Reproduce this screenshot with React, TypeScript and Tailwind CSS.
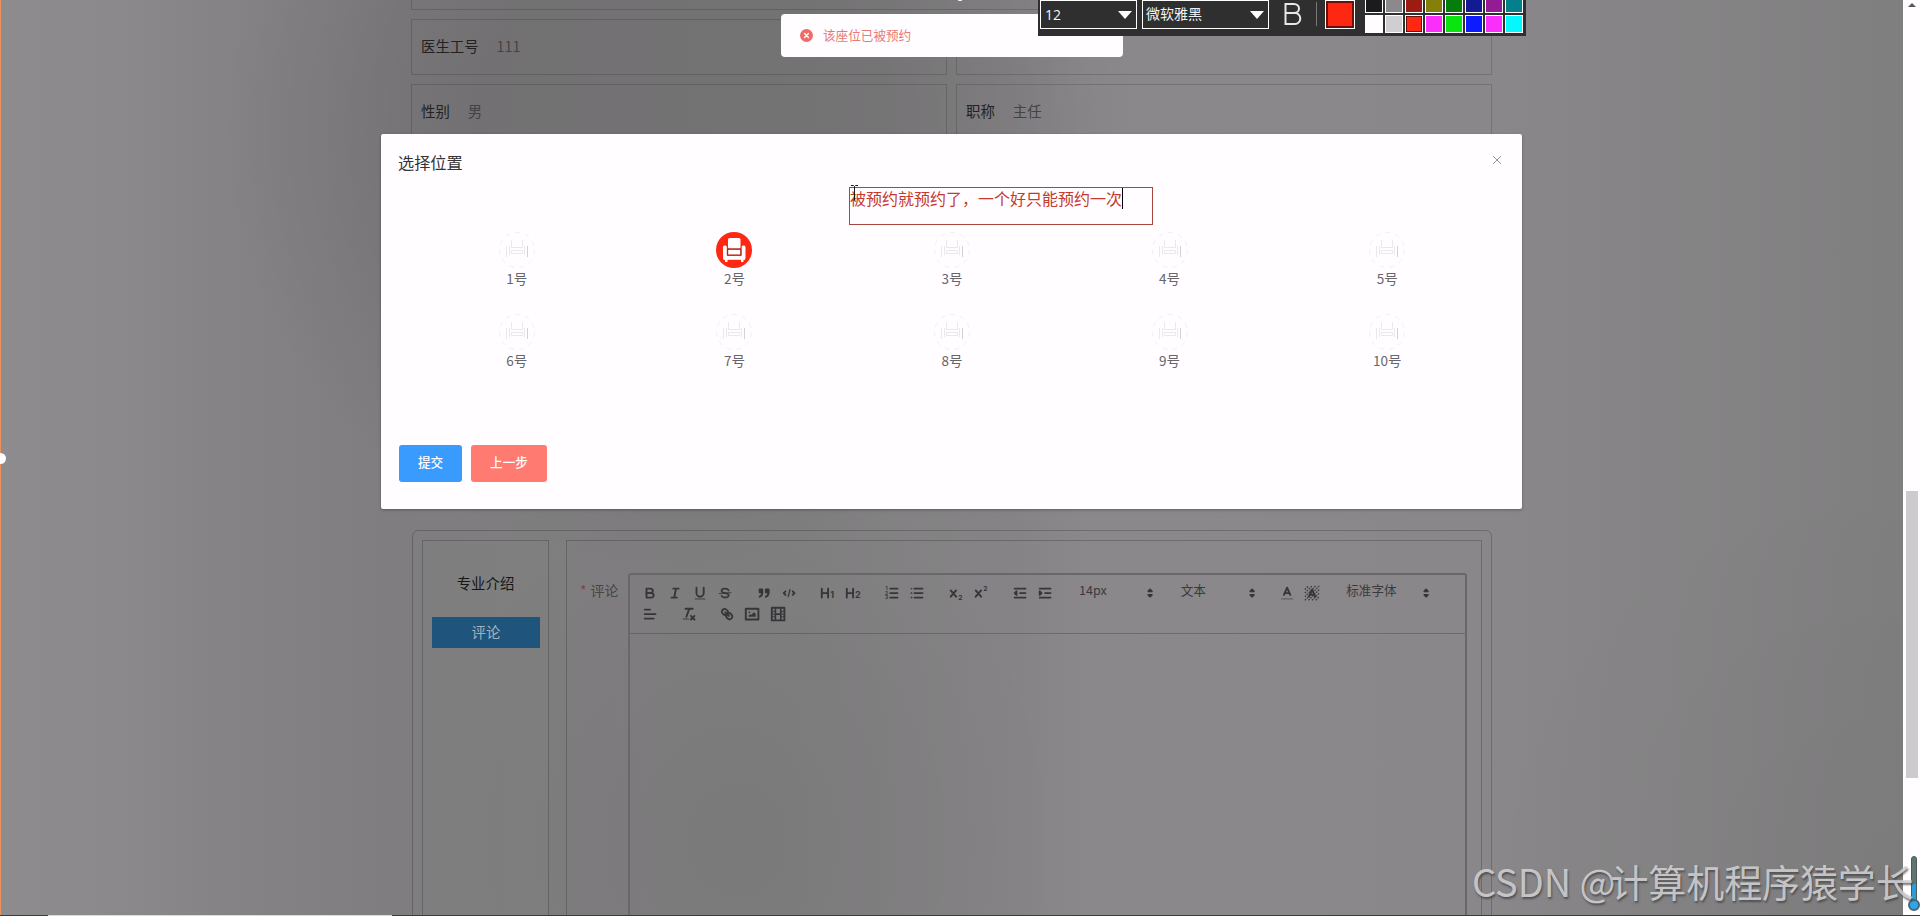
import React from 'react';

interface PickerProps {
  label: string;
  width: string;
}

interface SeatProps {
  number: number;
  taken?: boolean;
}

const topSwatches = [
  'bg-[#1b1a1c]',
  'bg-[#8b898c]',
  'bg-[#9c1c12]',
  'bg-[#84800a]',
  'bg-[#067c0c]',
  'bg-[#141a94]',
  'bg-[#931b93]',
  'bg-[#04808c]',
];

const bottomSwatches = [
  'bg-[#fffdff]',
  'bg-[#d0ced1]',
  'bg-[#fe2712]',
  'bg-[#fb2ffb]',
  'bg-[#0ae40f]',
  'bg-[#0c1cfe]',
  'bg-[#fb2ffb]',
  'bg-[#04f8fe]',
];

// 18x18 toolbar glyph, rendered at 90% page zoom
const Glyph: React.FC<{ children: React.ReactNode }> = ({ children }) => (
  <span className="flex h-[21.6px] w-[25.2px] shrink-0 items-center justify-center">
    <svg
      viewBox="0 0 18 18"
      className="h-[16.2px] w-[16.2px]"
      fill="none"
      stroke="#363638"
      strokeWidth="2.1"
      strokeLinecap="round"
      strokeLinejoin="round"
    >
      {children}
    </svg>
  </span>
);

const GlyphText: React.FC<{ x: number; y: number; size: number; children: string }> = ({
  x,
  y,
  size,
  children,
}) => (
  <text x={x} y={y} fontSize={size} fontFamily="Inter, sans-serif" fontWeight="700" fill="#363638" stroke="none">
    {children}
  </text>
);

const Group: React.FC<{ children: React.ReactNode }> = ({ children }) => (
  <span className="mr-[13.5px] flex">{children}</span>
);

const Picker: React.FC<PickerProps> = ({ label, width }) => (
  <span className={`flex h-[21.6px] items-center justify-between pr-[1px] pl-[8px] text-[12.6px] text-[#3a3a3c] ${width}`}>
    <span className="-mt-[4px] whitespace-nowrap">{label}</span>
    <svg viewBox="0 0 18 18" className="h-[16.2px] w-[16.2px]" fill="#363638" stroke="#363638" strokeWidth="2" strokeLinejoin="round">
      <polygon points="7 11 9 13 11 11" />
      <polygon points="7 7 9 5 11 7" />
    </svg>
  </span>
);

const Toolbar: React.FC = () => (
  <div className="h-[59px] border-b border-black/20 pt-[7px] pl-[7.4px]">
    <div className="flex">
      <Group>
        <Glyph>
          <path d="M5,4H9.5A2.5,2.5,0,0,1,12,6.5v0A2.5,2.5,0,0,1,9.5,9H5Z" />
          <path d="M5,9h5.5A2.5,2.5,0,0,1,13,11.5v0A2.5,2.5,0,0,1,10.5,14H5Z" />
        </Glyph>
        <Glyph>
          <path d="M7 4h6M5 14h6M8 14l2-10" />
        </Glyph>
        <Glyph>
          <path d="M5,3V9a4,4,0,0,0,8,0V3" />
          <path d="M3.5 15.5h11" strokeWidth="1" />
        </Glyph>
        <Glyph>
          <path d="M15.5 8.5l-13 1" strokeWidth="1" />
          <path d="M12.9 6C12.5 4.900 11 4 9 4 6.800 4 5 5.100 5 6.500 5 8 6.200 8.700 9 9s4 1 4 2.500S11.200 14 9 14c-2 0-3.500-.9-3.900-2" strokeWidth="1.8" />
        </Glyph>
      </Group>
      <Group>
        <Glyph>
          <g fill="#363638">
            <rect x="4" y="5" width="3" height="3" />
            <rect x="11" y="5" width="3" height="3" />
            <path d="M7,8c0,4.031-3,5-3,5" />
            <path d="M14,8c0,4.031-3,5-3,5" />
          </g>
        </Glyph>
        <Glyph>
          <path d="M5 7L3 9l2 2M13 7l2 2-2 2" />
          <path d="M10 5L8 13" strokeWidth="1.4" />
        </Glyph>
      </Group>
      <Group>
        <Glyph>
          <path d="M2 4v10M9 4v10M2 9h7" />
          <GlyphText x={11.4} y={15} size={10}>1</GlyphText>
        </Glyph>
        <Glyph>
          <path d="M2 4v10M9 4v10M2 9h7" />
          <GlyphText x={11.2} y={15} size={10}>2</GlyphText>
        </Glyph>
      </Group>
      <Group>
        <Glyph>
          <path d="M7 4h8M7 9h8M7 14h8" />
          <GlyphText x={1.6} y={5.6} size={5.5}>1</GlyphText>
          <GlyphText x={1.2} y={10.8} size={5.5}>2</GlyphText>
          <GlyphText x={1.2} y={16} size={5.5}>3</GlyphText>
        </Glyph>
        <Glyph>
          <path d="M6 4h9M6 9h9M6 14h9" />
          <path d="M2.500 4h.5M2.500 9h.5M2.500 14h.5" strokeWidth="1.600" />
        </Glyph>
      </Group>
      <Group>
        <Glyph>
          <path d="M3 6l6 7M9 6l-6 7" />
          <GlyphText x={11.5} y={16.5} size={7.5}>2</GlyphText>
        </Glyph>
        <Glyph>
          <path d="M3 6l6 7M9 6l-6 7" />
          <GlyphText x={11.5} y={7} size={7.5}>2</GlyphText>
        </Glyph>
      </Group>
      <Group>
        <Glyph>
          <path d="M3 14h12M3 4h12M9 9h6" />
          <path d="M5 7v4L3 9z" fill="#363638" />
        </Glyph>
        <Glyph>
          <path d="M3 14h12M3 4h12M9 9h6" />
          <path d="M3 7v4l2-2z" fill="#363638" />
        </Glyph>
      </Group>
      <Group>
        <Picker label="14px" width="w-[88.2px]" />
      </Group>
      <Group>
        <Picker label="文本" width="w-[88.2px]" />
      </Group>
      <Group>
        <Glyph>
          <path d="M3 15.500h12" strokeWidth="1.500" stroke="#626164" />
          <path d="M5.500 11L9 3l3.500 8M11.600 9H6.400" />
        </Glyph>
        <Glyph>
          <path
            d="M1 5l4-4M1 9l8-8M1 13L13 1M1 17L17 1M5 17L17 5M9 17l8-8M13 17l4-4"
            strokeWidth="1.300"
            strokeDasharray="1.800 1.200"
            strokeLinecap="butt"
          />
          <path d="M5.500 13L9 5l3.500 8M11.600 11H6.400" />
        </Glyph>
      </Group>
      <Picker label="标准字体" width="w-[97.2px]" />
    </div>
    <div className="flex">
      <Group>
        <Glyph>
          <path d="M3 9h12M3 14h10M3 4h6" />
        </Glyph>
      </Group>
      <Group>
        <Glyph>
          <path d="M5 3h8M6 12L9.300 3M11 11l4 4M15 11l-4 4" />
          <path d="M2.500 14.500h6" strokeWidth="1" />
        </Glyph>
      </Group>
      <Glyph>
        <path d="M7 7l4 4" />
        <path d="M8.9,4.577a3.476,3.476,0,0,1,.36,4.679A3.476,3.476,0,0,1,4.577,8.9C3.185,7.5,2.035,6.4,4.217,4.217S7.5,3.185,8.9,4.577Z" />
        <path d="M13.423,9.1a3.476,3.476,0,0,0-4.679-.36,3.476,3.476,0,0,0,.36,4.679c1.392,1.392,2.5,2.542,4.679.36S14.815,10.5,13.423,9.1Z" />
      </Glyph>
      <Glyph>
        <rect x="2" y="3" width="14" height="12" />
        <circle cx="6" cy="7" r="1" fill="#363638" stroke="none" />
        <path d="M5 12v-1l2-2 1 1 3-3 2 2v3z" fill="#363638" stroke="none" />
      </Glyph>
      <Glyph>
        <rect x="2" y="2" width="14" height="14" />
        <path d="M6 3v12M12 3v12M6 9h6" strokeWidth="1.800" />
        <path d="M3 6h3M3 9h3M3 12h3M12 6h3M12 9h3M12 12h3" strokeWidth="1" />
      </Glyph>
    </div>
  </div>
);

const Seat: React.FC<SeatProps> = ({ number, taken = false }) => (
  <div className="flex h-[82px] flex-col items-center">
    {taken ? (
      <svg viewBox="0 0 36 36" className="h-9 w-9">
        <circle cx="18" cy="18" r="18" fill="#fe2712" />
        <g fill="#fffdff">
          <rect x="12" y="6" width="12.500" height="10.500" rx="1.500" />
          <rect x="7" y="13.500" width="3.800" height="14" rx="1.500" />
          <rect x="25.700" y="13.500" width="3.800" height="14" rx="1.500" />
          <rect x="7.500" y="23.800" width="21.500" height="4" />
          <rect x="12" y="17.800" width="12.500" height="4.800" />
          <rect x="9" y="27" width="2.500" height="3" />
          <rect x="25" y="27" width="2.500" height="3" />
        </g>
        <path d="M11.700 17v6.200h13.100V17z" fill="none" stroke="#8c2a1e" strokeWidth=".9" />
      </svg>
    ) : (
      <svg viewBox="0 0 36 36" className="h-9 w-9" fill="none" stroke="#e9e8eb">
        <circle cx="18" cy="18" r="17.500" strokeDasharray="5 5" strokeWidth=".7" />
        <path d="M12.500 8v7.500h11V8M12.500 18.500h11v3h-11zM7.500 14v11M10.500 14v9M25.500 14v9" />
        <path d="M28.500 14v11" stroke="#d2d1d4" />
      </svg>
    )}
    <span className="text-[13.500px] leading-5 text-[#66656a]">{number}号</span>
  </div>
);

const InfoCell: React.FC<{ label: string; value: string }> = ({ label, value }) => (
  <div className="flex h-14 w-[536px] items-center gap-[18px] border border-black/15 pb-[2px] pl-[9px] text-[14.400px]">
    <span className="text-[#222223]">{label}</span>
    <span className="text-[#434244]">{value}</span>
  </div>
);

const Swatches: React.FC<{ colors: string[] }> = ({ colors }) => (
  <div className="flex gap-[2px]">
    {colors.map((color, i) => (
      <span
        key={i}
        className={`h-[18px] w-[18px] border ${color} ${color === 'bg-[#fe2712]' ? 'border-white ring-1 ring-[#6b0f0a] ring-inset' : 'border-white'}`}
      />
    ))}
  </div>
);

const DrawingBar: React.FC = () => (
  <div className="absolute top-0 left-[1038px] flex h-9 w-[488px] overflow-hidden bg-[#2e2f2e] pl-[2px] text-[#f4f2f4]">
    <div className="flex h-[29px] w-[97px] items-center justify-between border border-white pr-1 pl-1">
      <span className="font-['Open_Sans'] text-[14px]">12</span>
      <svg viewBox="0 0 14 8" className="h-2 w-[14px]" fill="#fffdff">
        <path d="M0 0h14L7 8z" />
      </svg>
    </div>
    <div className="ml-[5px] flex h-[29px] w-[127px] items-center justify-between border border-white pr-1 pl-[3px]">
      <span className="-mt-[2px] text-[14px]">微软雅黑</span>
      <svg viewBox="0 0 14 8" className="h-2 w-[14px]" fill="#fffdff">
        <path d="M0 0h14L7 8z" />
      </svg>
    </div>
    <svg viewBox="0 0 18 22" className="mt-[3px] ml-[15px] h-[22px] w-[18px]" fill="none" stroke="#e8e6e8" strokeWidth="2">
      <path d="M1.500 1H10a5 4.500 0 0 1 0 9H1.500zM1.500 10H11a5.200 5.400 0 0 1 0 11H1.500z" />
    </svg>
    <span className="mt-[2px] ml-[14px] h-6 w-px bg-[#777678]" />
    <span className="ml-2 h-[29px] w-[30px] border border-white bg-[#fe2712] ring-2 ring-[#6b0f0a] ring-inset" />
    <div className="-mt-[5px] ml-[10px] flex flex-col gap-[2px]">
      <Swatches colors={topSwatches} />
      <Swatches colors={bottomSwatches} />
    </div>
  </div>
);

const Toast: React.FC = () => (
  <div className="absolute top-[14px] left-[781px] flex h-[43px] w-[342px] items-center rounded-[4px] bg-[#fffdff] pl-[19px]">
    <svg viewBox="0 0 12 12" className="h-[13px] w-[13px]">
      <circle cx="6" cy="6" r="6" fill="#f06a66" />
      <path d="M4.200 4.200l3.600 3.600M7.800 4.200L4.200 7.800" stroke="#fff" strokeWidth="1.300" strokeLinecap="round" />
    </svg>
    <span className="-mt-px ml-[10px] text-[12.600px] text-[#e87a76]">该座位已被预约</span>
  </div>
);

const SeatDialog: React.FC = () => (
  <div className="absolute top-[134px] left-[381px] flex h-[375px] w-[1141px] flex-col rounded-[2px] bg-[#fffdff] px-[18px] shadow-[0_1px_3px_rgba(0,0,0,0.3)]">
    <div className="flex items-start justify-between pt-[17px]">
      <h2 className="-ml-px text-[16.200px] leading-[22px] text-[#343336]">选择位置</h2>
      <svg viewBox="0 0 10 10" className="mt-[4px] mr-[2px] h-[10px] w-[10px]" stroke="#98979b" strokeWidth="1">
        <path d="M1 1l8 8M9 1L1 9" />
      </svg>
    </div>
    <div className="mt-[59px] ml-[9px] grid w-[1088px] grid-cols-5">
      {Array.from({ length: 10 }, (_, i) => (
        <Seat key={i} number={i + 1} taken={i === 1} />
      ))}
    </div>
    <div className="mt-[49px] flex gap-[9px] text-[12.600px] font-medium text-white">
      <button className="h-[37px] w-[63px] rounded-[3px] bg-[#3a9bff] pb-[2px]">提交</button>
      <button className="h-[37px] w-[76px] rounded-[3px] bg-[#ff7a70] pb-[2px]">上一步</button>
    </div>
  </div>
);

const Annotation: React.FC = () => (
  <div className="absolute top-[187px] left-[849px] h-[38px] w-[304px] border border-[#a8483c]">
    <div className="flex">
      <span className="-mt-px text-[16px] leading-[22px] whitespace-nowrap text-[#c43a2c]">被预约就预约了，一个好只能预约一次</span>
      <span className="h-[21px] w-px bg-black" />
    </div>
    <svg viewBox="0 0 7 17" className="absolute -top-[3px] left-[1px] h-[17px] w-[7px]" fill="none" stroke="#1a1a1a">
      <path d="M0 .5h2.500l1 1 1-1H7M3.500 1.500v14" />
    </svg>
  </div>
);

const App: React.FC = () => {
  return (
    <div className="relative h-[916px] w-[1920px] overflow-hidden bg-[radial-gradient(460px_440px_at_680px_130px,rgba(0,0,0,0.1)_45%,transparent),radial-gradient(330px_380px_at_740px_840px,rgba(0,0,0,0.05),transparent),radial-gradient(420px_420px_at_1880px_880px,rgba(0,0,0,0.03),transparent),linear-gradient(90deg,#8e8c8e_0px,#8a888a_130px,#848284_240px,#7f7d7f_400px,#818081_800px,#858385_1010px,#8a888a_1090px,#898789_1500px,#807f80_1900px)] font-['Noto_Sans_CJK_SC',sans-serif]">
      <div className="ml-[411px] flex h-full w-[1081px] flex-col">
        <div className="h-[10px] shrink-0 border-x border-b border-black/15" />
        <div className="mt-[9px] grid shrink-0 grid-cols-[536px_536px] gap-[9px]">
          <InfoCell label="医生工号" value="111" />
          <InfoCell label="" value="" />
          <InfoCell label="性别" value="男" />
          <InfoCell label="职称" value="主任" />
        </div>
        <div className="mt-[390px] ml-[1px] flex h-[420px] shrink-0 rounded-t-[6px] border border-black/20 pt-[9px] pr-[9px] pl-[9px]">
          <div className="w-[127px] border border-[#656466] bg-[#7e7f7d]/50 px-[9px] text-center text-[14.400px]">
            <div className="mt-[26px] h-[31px] leading-[31px] text-[#161616]">专业介绍</div>
            <div className="mt-[19px] -mr-px h-[31px] bg-[#1f557d] leading-[29px] text-[#a4b2bd]">评论</div>
          </div>
          <div className="ml-[17px] flex flex-1 border border-black/20 pt-[32px] pr-[14px] pl-[13px]">
            <div className="flex w-[48px] shrink-0 gap-[4px] pt-[6px] text-[14px] leading-[22px] text-[#464547]">
              <span className="text-[#8b3f46]">*</span>
              <span>评论</span>
            </div>
            <div className="flex-1 rounded-t-[3px] border-2 border-[#68676a]">
              <Toolbar />
            </div>
          </div>
        </div>
      </div>

      <SeatDialog />
      <Toast />
      <DrawingBar />
      <Annotation />

      {/* Browser scrollbar */}
      <div className="absolute top-0 right-0 flex h-full w-[17px] flex-col items-center bg-[#fffdff]">
        <svg viewBox="0 0 8 4" className="mt-[3px] h-1 w-2" fill="#58565a">
          <path d="M0 4h8L4 0z" />
        </svg>
        <span className="mt-[484px] h-[287px] w-3 bg-[#cdcbce]" />
      </div>

      {/* Progress tube in the corner */}
      <svg viewBox="0 0 14 58" className="absolute top-[855px] left-[1907px] h-[58px] w-[14px]">
        <rect x="4.500" y="1.500" width="5" height="48" rx="2.500" fill="#61756f" stroke="#4a5a5c" />
        <rect x="5" y="29" width="4" height="20" fill="#2b9ed8" />
        <circle cx="7" cy="50" r="5" fill="#2ea6e6" stroke="#4a6478" strokeWidth="2" />
      </svg>

      <div className="absolute top-[853px] left-[1472px] text-[38px] leading-[56px] tracking-[-0.1px] whitespace-nowrap text-[#d2d1d3]/90 [text-shadow:1px_2px_2px_rgba(60,60,60,0.7)]">
        CSDN <span className="tracking-[-5px]">@</span>计算机程序猿学长
      </div>

      {/* Capture frame with its handles */}
      <span className="absolute top-0 left-0 h-full w-px bg-[#ea935c]" />
      <span className="absolute top-[453px] -left-[5px] h-[11px] w-[11px] rounded-full bg-white" />
      <span className="absolute -top-[5px] left-[957px] h-[6px] w-[6px] rounded-full bg-white" />
      <div className="absolute bottom-0 left-0 flex h-px w-full bg-[#3c3b3d]">
        <span className="ml-12 w-[344px] bg-[#dcd8de]" />
      </div>
    </div>
  );
};

export default App;
